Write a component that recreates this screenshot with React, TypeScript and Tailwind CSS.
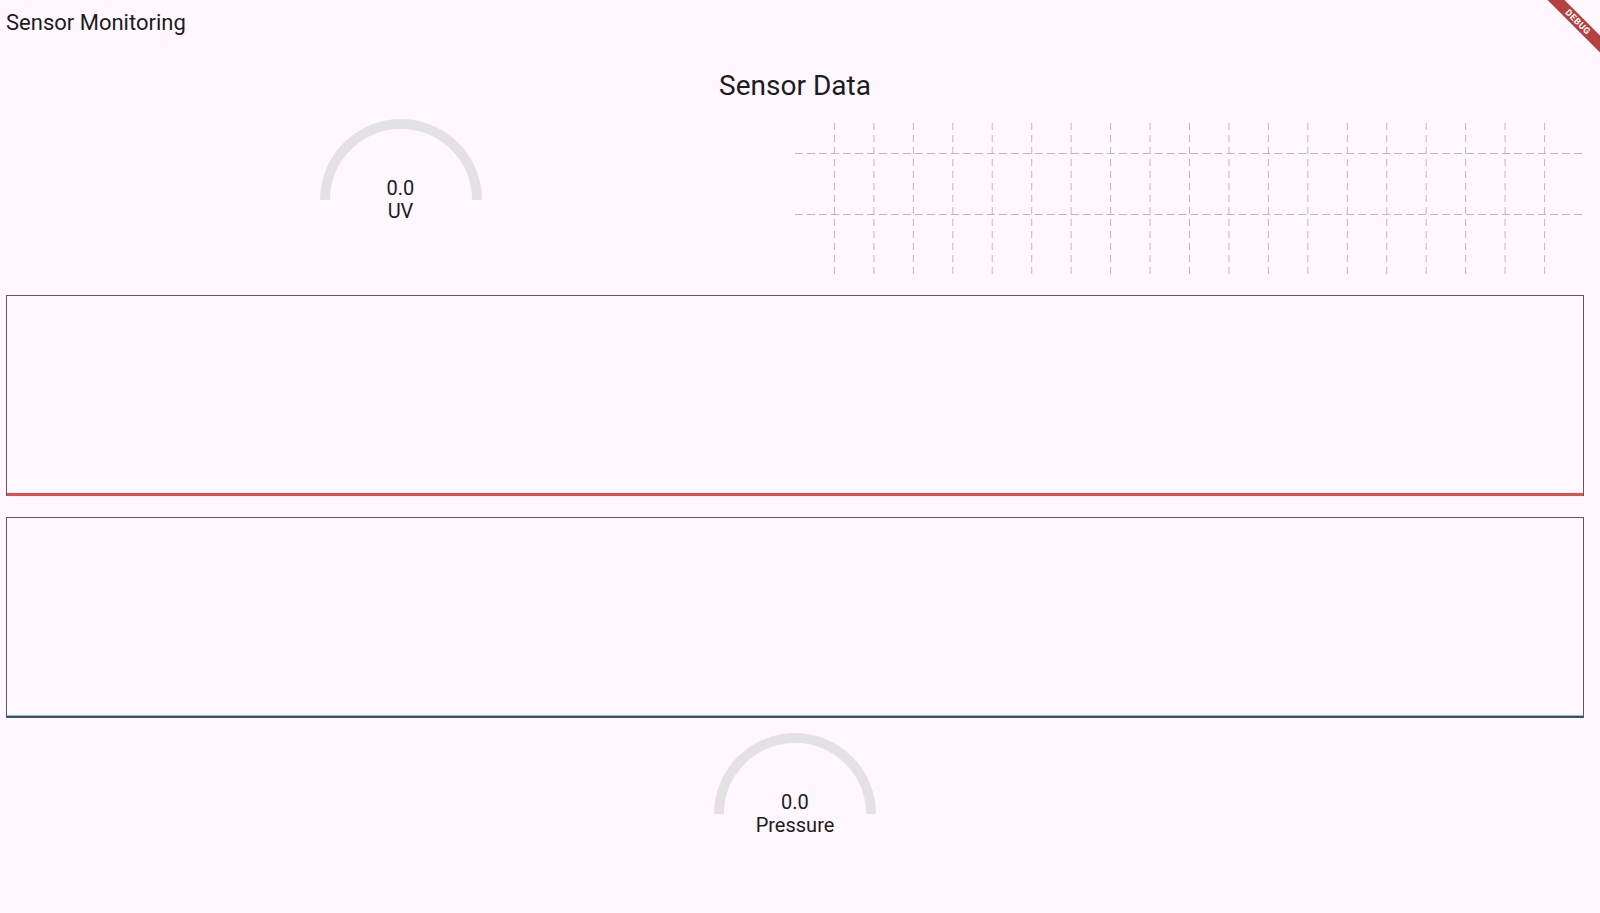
import React from 'react';

type GaugeProps = {
  value: number;
  label: string;
};

function Gauge({ value, label }: GaugeProps) {
  return (
    <div className="relative h-[110px] w-[172px]">
      <svg width="172" height="110" viewBox="0 0 172 110">
        <path d="M 10 86 A 76 76 0 0 1 162 86" fill="none" stroke="#e3e1e3" strokeWidth="10" />
      </svg>
      <div className="absolute left-0 right-0 top-[63px] text-center text-[20px] leading-[23.4px] text-[#1d1b20]">
        <div>{value.toFixed(1)}</div>
        <div>{label}</div>
      </div>
    </div>
  );
}

function GridChart() {
  const cols = Array.from({ length: 19 }, (_, i) => (i + 1) * 39.5);
  const rows = [30.5, 91.5];
  return (
    <svg className="block h-[152px] w-full" viewBox="0 0 790 152" preserveAspectRatio="none">
      {rows.map((y) => (
        <line key={y} x1="0" y1={y} x2="790" y2={y} stroke="#bdb7c1" strokeWidth="1" strokeDasharray="8 4" />
      ))}
      {cols.map((x) => (
        <line key={x} x1={x} y1="0" x2={x} y2="152" stroke="#bdb7c1" strokeWidth="1" strokeDasharray="7 5" />
      ))}
    </svg>
  );
}

function DebugBanner() {
  return (
    <div className="pointer-events-none absolute right-0 top-0 h-[60px] w-[60px] overflow-hidden">
      <div className="absolute left-[-22px] top-[16px] flex h-[12px] w-[120px] rotate-45 items-center justify-center bg-[#b5403f] text-[9px] font-bold leading-none tracking-[0.5px] text-white">
        DEBUG
      </div>
    </div>
  );
}

export default function App() {
  return (
    <div className="relative min-h-screen bg-[#fef7ff] pl-[6px] pr-[16px] text-[#1d1b20] [font-family:Roboto,sans-serif]">
      <div className="pt-[10px] text-[22px] leading-[26px]">Sensor Monitoring</div>

      <div className="mt-[33px] text-center text-[28px] leading-[34px]">Sensor Data</div>

      <div className="flex h-[182px]">
        <div className="flex flex-1 justify-center pt-[11px]">
          <Gauge value={0} label="UV" />
        </div>
        <div className="flex-1 pt-[20px]">
          <GridChart />
        </div>
      </div>

      <div className="mt-[10px] flex h-[201px] flex-col justify-end border border-b-0 border-[#5d5862]">
        <div className="h-[3px] bg-[#e0504a]" />
      </div>

      <div className="mt-[21px] flex h-[201px] flex-col justify-end border border-b-0 border-[#5d5862]">
        <div className="h-[1px] bg-[#8fbde4]" />
        <div className="h-[2px] bg-[#3b5269]" />
      </div>

      <div className="mt-[10px] flex justify-center">
        <Gauge value={0} label="Pressure" />
      </div>

      <DebugBanner />
    </div>
  );
}
